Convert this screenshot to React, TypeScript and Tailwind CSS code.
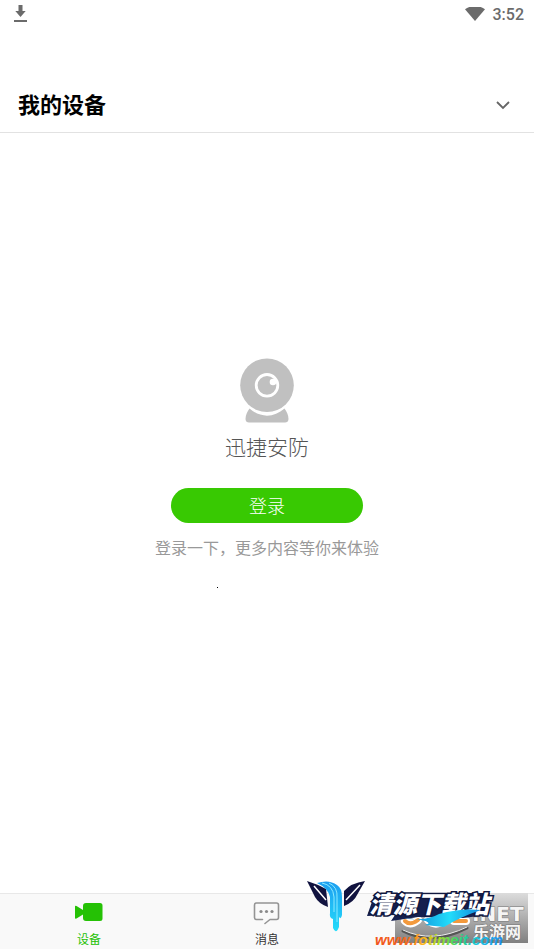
function StatusBar() {
  return (
    <div className="flex h-[30px] items-center justify-between pr-[10px] pl-[13px] text-[#6b6b6b]">
      <svg className="h-5 w-[15px]" viewBox="0 0 15 20" fill="currentColor" aria-label="下载">
        <path d="M5.500 0h4v6h3.200L7.500 12 2.300 6h3.200z" />
        <path d="M1 15h13v2H1z" />
      </svg>
      <div className="flex items-center gap-2">
        <svg className="h-4 w-5" viewBox="0 0 20 16" fill="currentColor" aria-label="Wi-Fi">
          <path d="M0 2.300C5.500-2 14.500-2 20 2.300L10 14z" />
        </svg>
        <span className="font-[Roboto,sans-serif] text-base leading-7 font-medium">3:52</span>
      </div>
    </div>
  );
}

function Webcam() {
  return (
    <svg className="h-[65px] w-[54px]" viewBox="0 0 54 65" aria-hidden="true">
      <path
        d="M9.500 50.500C20 60 34 60 44.500 50.500C46.500 53 48.500 57 48.500 61C48.500 63.500 47 64.500 45 64.500H9C7 64.500 5.500 63.500 5.500 61C5.500 57 7.500 53 9.500 50.500Z"
        fill="#c0c0c0"
      />
      <circle cx="27" cy="27.500" r="28.500" fill="#fff" />
      <circle cx="27" cy="27.300" r="26.800" fill="#c0c0c0" />
      <circle cx="27" cy="27.300" r="10.800" fill="none" stroke="#fff" strokeWidth="2.800" />
      <circle cx="33" cy="24" r="3.300" fill="#fff" />
    </svg>
  );
}

function CameraIcon() {
  return (
    <svg className="h-5 w-7" viewBox="0 0 28 20" fill="currentColor" aria-hidden="true">
      <path d="M0 4.500Q0 3.500 1.500 4L8 8V4Q8 1 11 1H25Q27.500 1 27.500 3.500V16.500Q27.500 19 25 19H11Q8 19 8 16V12.500L1.500 16.500Q0 17 0 16Z" />
    </svg>
  );
}

function MessageIcon() {
  return (
    <svg className="h-6 w-7" viewBox="0 0 28 24" fill="none" aria-hidden="true">
      <path
        d="M9.500 17.500H3.500Q1.500 17.500 1.500 15.500V3Q1.500 1 3.500 1H23.500Q25.500 1 25.500 3V15.500Q25.500 17.500 23.500 17.500H17L12 21.500"
        stroke="#949494"
        strokeWidth="1.600"
        strokeLinecap="round"
        strokeLinejoin="round"
      />
      <g fill="#8a8a8a">
        <circle cx="8" cy="9.500" r="1.600" />
        <circle cx="13.500" cy="9.500" r="1.600" />
        <circle cx="19" cy="9.500" r="1.600" />
      </g>
    </svg>
  );
}

function Watermark() {
  return (
    <svg
      className="pointer-events-none absolute right-0 bottom-0 h-[79px] w-[234px]"
      viewBox="0 0 234 79"
      aria-hidden="true"
    >
      <defs>
        <linearGradient id="plate" x1="0" y1="0" x2="0" y2="1">
          <stop offset="0" stopColor="#dcdcdc" />
          <stop offset="1" stopColor="#808080" />
        </linearGradient>
        <linearGradient id="water" x1="0" y1="0" x2="0" y2="1">
          <stop offset="0" stopColor="#1c9df0" />
          <stop offset="1" stopColor="#25dcfa" />
        </linearGradient>
        <linearGradient id="swoosh" x1="0" y1="0" x2="1" y2="0">
          <stop offset="0" stopColor="#0879cf" />
          <stop offset="0.600" stopColor="#22dcfa" />
          <stop offset="1" stopColor="#1187dc" />
        </linearGradient>
        <linearGradient id="address" x1="0" y1="0" x2="1" y2="0">
          <stop offset="0" stopColor="#f0521e" />
          <stop offset="0.260" stopColor="#f56b20" />
          <stop offset="0.380" stopColor="#ffb81c" />
          <stop offset="0.500" stopColor="#a5df26" />
          <stop offset="0.650" stopColor="#2fd66c" />
          <stop offset="0.800" stopColor="#17c6df" />
          <stop offset="1" stopColor="#228bee" />
        </linearGradient>
      </defs>

      <path d="M95 23H228V73H95Z" fill="url(#plate)" />
      <g fill="none" strokeLinecap="round">
        <path d="M105 51Q110 56 118 50M128 50Q136 57 144 50M154 51H166" stroke="#fff" strokeWidth="8" />
        <path d="M105 51Q110 56 118 50M154 51H166" stroke="#f39a3d" strokeWidth="4" />
        <path d="M128 50Q136 57 144 50" stroke="#3a96dc" strokeWidth="4" />
        <path d="M103 61Q132 76 167 58" stroke="#555" strokeWidth="3" />
        <path d="M103 60Q132 74 167 57" stroke="#eee" strokeWidth="1" />
      </g>
      <g fill="#f5f5f5" stroke="#777" strokeWidth="1" paintOrder="stroke">
        <text x="172" y="51" fontSize="20" fontWeight="700" fontFamily="DejaVu Sans, sans-serif">.NET</text>
        <text x="173" y="68" fontSize="16" fontWeight="700" fontFamily="Noto Sans CJK SC, sans-serif">乐游网</text>
      </g>

      <path d="M7 11Q17 14 26 19L28 37Q19 34 15 27Z" fill="#11133f" />
      <path d="M65 11Q51 13 44 21V36Q54 32 57 25Z" fill="#11133f" />
      <path d="M14 16L26 30M60 15L46 30" fill="none" stroke="#fff" strokeWidth="1.500" />
      <path
        d="M17 13Q29 9 37 15Q42 18 42 27V45Q41 50 39 47V57Q36 65 33 58V49Q29 48 30 43V27Q28 18 17 13Z"
        fill="url(#water)"
      />
      <path d="M22 13Q33 15 34 27V42M29 13Q38 17 37 28V52" fill="none" stroke="#8beaff" strokeWidth="1" />

      <path d="M75 23H190L187 45L163 48L118 47L91 51L95 45L67 46Z" fill="#15204f" />
      <text
        x="69"
        y="43"
        fill="#fff"
        stroke="#11183f"
        strokeWidth="3"
        paintOrder="stroke"
        fontSize="24"
        fontStyle="italic"
        fontWeight="900"
        fontFamily="Noto Sans CJK SC, sans-serif"
      >
        清源下载站
      </text>
      <path d="M103 48Q125 52 139 44Q160 38 181 40Q160 47 144 57L125 55Q139 51 103 48Z" fill="url(#swoosh)" />
      <text
        x="75"
        y="75"
        fill="url(#address)"
        fontSize="15"
        fontStyle="italic"
        fontWeight="700"
        fontFamily="Liberation Sans, sans-serif"
      >
        www.fotimeit.com
      </text>
    </svg>
  );
}

export default function App() {
  return (
    <div className="relative flex min-h-screen flex-col bg-white font-['Noto_Sans_CJK_SC',sans-serif]">
      <StatusBar />
      <header className="flex items-center justify-between border-b border-[#e2e2e2] pt-[57px] pr-[23px] pb-[13px] pl-[18px]">
        <h1 className="text-[22px] leading-8 font-bold text-black">我的设备</h1>
        <button type="button" aria-label="展开设备列表" className="text-[#666]">
          <svg className="h-4 w-4" viewBox="0 0 16 16" fill="none" stroke="currentColor" strokeWidth="1.800">
            <path d="M2 7L8 13L14 7" />
          </svg>
        </button>
      </header>

      <main className="flex flex-1 flex-col items-center pt-[225px]">
        <Webcam />
        <p className="mt-[9px] text-[21px] leading-7 font-light text-[#555]">迅捷安防</p>
        <button
          type="button"
          className="mt-7 h-[35px] w-48 rounded-full bg-[#38c902] text-lg leading-[35px] font-light text-white"
        >
          登录
        </button>
        <p className="mt-3 text-base leading-6 text-[#999]">登录一下，更多内容等你来体验</p>
        <span className="mt-7 mr-[99px] h-px w-px bg-black" />
      </main>

      <nav className="grid h-14 grid-cols-3 border-t border-[#e8e8e8] bg-[#f9f9f9] text-xs leading-4">
        <button type="button" className="flex flex-col items-center pt-2 text-[#25c105]">
          <CameraIcon />
          <span className="mt-[9px]">设备</span>
        </button>
        <button type="button" className="flex flex-col items-center pt-2 text-[#333]">
          <MessageIcon />
          <span className="mt-[5px]">消息</span>
        </button>
      </nav>
      <Watermark />
    </div>
  );
}
